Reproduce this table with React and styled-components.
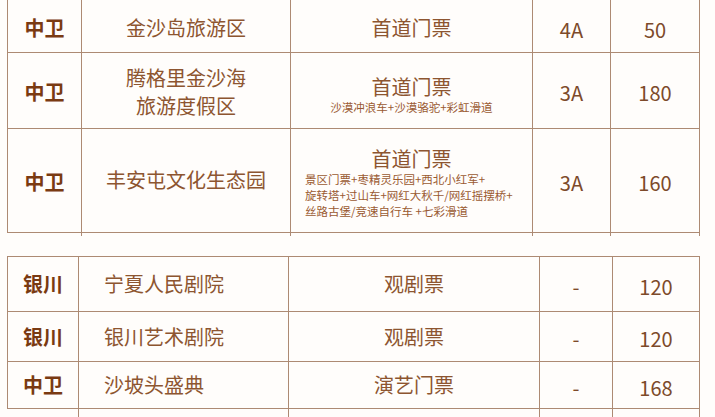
import React from "react";
import styled, { createGlobalStyle } from "styled-components";

const LINE = "#ad8a73";

const Global = createGlobalStyle`
  html, body {
    margin: 0;
    padding: 0;
    background: #fffdfb;
    font-family: "Noto Sans CJK SC", "Noto Sans", sans-serif;
    overflow: hidden;
  }
`;

const Page = styled.div`
  width: 715px;
  height: 417px;
  overflow: hidden;
`;

const Table = styled.table`
  border-collapse: collapse;
  table-layout: fixed;
  width: 692px;
  margin-left: 7px;
  margin-top: ${(p) => p.$top || 0}px;
`;

const Row = styled.tr`
  height: ${(p) => p.$h}px;
`;

const Cell = styled.td`
  border: 1.5px solid ${LINE};
  padding: 0;
  text-align: ${(p) => (p.$left ? "left" : "center")};
  padding-left: ${(p) => (p.$left ? 25 : 0)}px;
  padding-top: ${(p) => p.$pt || 0}px;
  vertical-align: middle;
  color: #8d5530;
  font-size: 20px;
  line-height: 28px;
`;

const City = styled(Cell)`
  color: #7a3a12;
  font-weight: 700;
  font-size: 20px;
`;

const Num = styled(Cell)`
  color: #7d4a2a;
  padding-top: 5px;
`;

const StubCell = styled.td`
  border-left: 1.5px solid ${LINE};
  border-right: 1.5px solid ${LINE};
  border-top: ${(p) => (p.$bottom ? `1.5px solid ${LINE}` : "hidden")};
  border-bottom: hidden;
  padding: 0;
  &:first-child {
    border-left: ${(p) => (p.$bottom ? "hidden" : `1.5px solid ${LINE}`)};
  }
`;

const Ticket = styled.div`
  font-size: 20px;
  line-height: 24px;
`;

const Desc = styled.div`
  font-size: 11.5px;
  line-height: 16px;
  color: #9a5a32;
  text-align: ${(p) => (p.$left ? "left" : "center")};
  padding-left: ${(p) => (p.$left ? 14 : 0)}px;
  white-space: nowrap;
`;

const Cols = ({ widths }) => (
  <colgroup>
    {widths.map((w, i) => (
      <col key={i} style={{ width: w }} />
    ))}
  </colgroup>
);

const Stub = ({ h, bottom }) => (
  <Row $h={h}>
    {[0, 1, 2, 3, 4].map((i) => (
      <StubCell key={i} $bottom={bottom} />
    ))}
  </Row>
);

const shows = [
  { city: "银川", name: "宁夏人民剧院", type: "观剧票", price: "120", h: 55 },
  { city: "银川", name: "银川艺术剧院", type: "观剧票", price: "120", h: 50 },
  { city: "中卫", name: "沙坡头盛典", type: "演艺门票", price: "168", h: 47 },
];

export default function App() {
  return (
    <Page>
      <Global />
      <Table>
        <Cols widths={[74, 209, 242, 78, 89]} />
        <tbody>
          <Stub h={4} />
          <Row $h={48}>
            <City>中卫</City>
            <Cell>金沙岛旅游区</Cell>
            <Cell>首道门票</Cell>
            <Num>4A</Num>
            <Num>50</Num>
          </Row>
          <Row $h={76}>
            <City $pt={4}>中卫</City>
            <Cell $pt={4}>
              腾格里金沙海
              <br />
              旅游度假区
            </Cell>
            <Cell $pt={10}>
              <Ticket>首道门票</Ticket>
              <Desc>沙漠冲浪车+沙漠骆驼+彩虹滑道</Desc>
            </Cell>
            <Num $pt={10}>3A</Num>
            <Num $pt={10}>180</Num>
          </Row>
          <Row $h={104}>
            <City $pt={4}>中卫</City>
            <Cell>丰安屯文化生态园</Cell>
            <Cell $pt={6}>
              <Ticket>首道门票</Ticket>
              <Desc $left>
                景区门票+枣精灵乐园+西北小红军+
                <br />
                旋转塔+过山车+网红大秋千/网红摇摆桥+
                <br />
                丝路古堡/竞速自行车 +七彩滑道
              </Desc>
            </Cell>
            <Num>3A</Num>
            <Num>160</Num>
          </Row>
          <Stub h={4} bottom />
        </tbody>
      </Table>

      <Table $top={20}>
        <Cols widths={[71, 210, 251, 73, 87]} />
        <tbody>
          {shows.map((s, i) => (
            <Row key={i} $h={s.h}>
              <City>{s.city}</City>
              <Cell $left>{s.name}</Cell>
              <Cell>{s.type}</Cell>
              <Num>-</Num>
              <Num>{s.price}</Num>
            </Row>
          ))}
          <Stub h={12} bottom />
        </tbody>
      </Table>
    </Page>
  );
}
